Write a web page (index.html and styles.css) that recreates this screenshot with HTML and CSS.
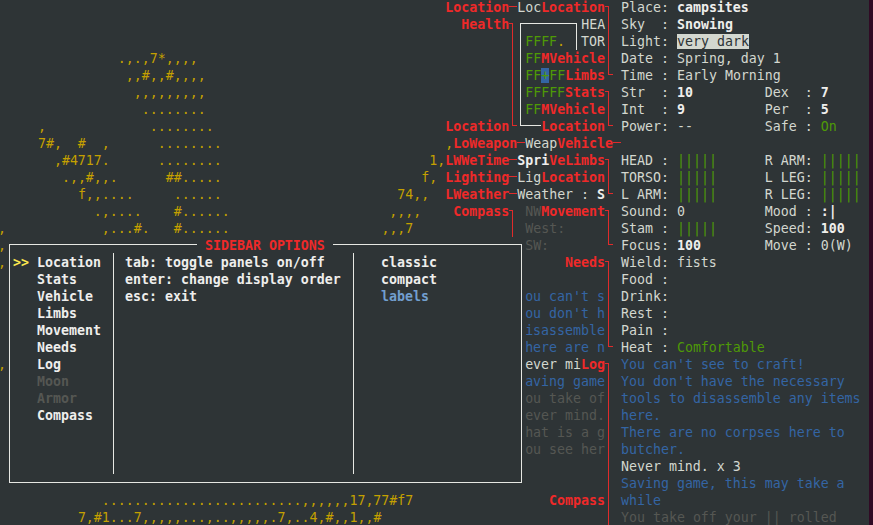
FILE: index.html
```html
<!DOCTYPE html>
<html lang="en">
<head>
<meta charset="utf-8">
<title>Sidebar options</title>
<link rel="stylesheet" href="styles.css">
</head>
<body>
<main class="term">
<div class="row">                                                        <b class="r">Location</b><i class="h r"></i>Loc<b class="r">Location</b><i class="tr r"></i> Place: <b>campsites</b></div>
<div class="row">                                                          <b class="r">Health</b><i class="tr r"></i><i class="tl w"></i><i class="h w"></i><i class="h w"></i><i class="h w"></i><i class="h w"></i><i class="h w"></i><i class="h w"></i><i class="tr w"></i>HEA<i class="v r"></i> Sky  : <b>Snowing</b></div>
<div class="row">                                                                <i class="v r"></i><i class="v w"></i><span class="g">FFFF</span><span class="m">.</span> <i class="v w"></i>TOR<i class="v r"></i> Light: <span class="inv">very dark</span></div>
<div class="row">               <span class="m">.,.,7*,,,,</span>                                       <i class="v r"></i><i class="v w"></i><span class="g">FF</span><b class="r">MVehicle</b><i class="v r"></i> Date : Spring, day 1</div>
<div class="row">                <span class="m">,,#,,#,,,,</span>                                      <i class="v r"></i><i class="v w"></i><span class="g">FF</span><span class="cur">+</span><span class="g">FF</span><b class="r">Limbs</b><i class="bl r"></i> Time : Early Morning</div>
<div class="row">                 <span class="m">,,,,,,,,,</span>                                      <i class="v r"></i><i class="v w"></i><span class="g">FFFFF</span><b class="r">Stats</b><i class="tr r"></i> Str  : <b>10</b>         Dex  : <b>7</b></div>
<div class="row">                  <span class="m">........</span>                                      <i class="v r"></i><i class="v w"></i><span class="g">FF</span><b class="r">MVehicle</b><i class="v r"></i> Int  : <b>9</b>          Per  : <b>5</b></div>
<div class="row">     <span class="m">,</span>             <span class="m">........</span>                             <b class="r">Location</b><i class="bl r"></i><i class="bl w"></i><i class="h w"></i><i class="h w"></i><b class="r">Location</b><i class="bl r"></i> Power: --         Safe : <span class="g">On</span></div>
<div class="row">     <span class="m">7#,  #  ,</span>      <span class="m">........</span>                            <span class="m">,</span><b class="r">LoWeapon</b><i class="h r"></i>Weap<b class="r">Vehicle</b><i class="h r"></i></div>
<div class="row">       <span class="m">,#4717.</span>      <span class="m">........</span>                          <span class="m">1,</span><b class="r">LWWeTime</b><i class="h r"></i><b>Spri</b><b class="r">Ve</b><b class="r">Limbs</b><i class="tr r"></i> HEAD : <span class="g">|||||</span>      R ARM: <span class="g">|||||</span></div>
<div class="row">        <span class="m">.,,#,,.</span>      <span class="m">##.....</span>                         <span class="m">f,</span> <b class="r">Lighting</b><i class="h r"></i>Lig<b class="r">Location</b><i class="v r"></i> TORSO: <span class="g">|||||</span>      L LEG: <span class="g">|||||</span></div>
<div class="row">          <span class="m">f,,....</span>     <span class="m">......</span>                      <span class="m">74,,</span>  <b class="r">LWeather</b><i class="h r"></i>Weather : <b>S</b><i class="bl r"></i> L ARM: <span class="g">|||||</span>      R LEG: <span class="g">|||||</span></div>
<div class="row">            <span class="m">.,....</span>    <span class="m">#......</span>                    <span class="m">,,,,</span>    <b class="r">Compass</b><i class="tr r"></i> <span class="d">NW</span><b class="r">Movement</b><i class="tr r"></i> Sound: 0          Mood : <b>:</b><b>|</b></div>
<div class="row"><span class="m">,</span>            <span class="m">,...#.</span>   <span class="m">#......</span>                   <span class="m">,,,7</span>            <i class="v r"></i> <span class="d">West:</span>     <i class="v r"></i> Stam : <span class="g">|||||</span>      Speed: <b>100</b></div>
<div class="row"><span class="m">,</span>                                                                 <span class="d">SW:</span>       <i class="bl r"></i> Focus: <b>100</b>        Move : 0(W)</div>
<div class="row"><span class="m">,</span>                                                                      <b class="r">Needs</b><i class="tr r"></i> Wield: fists</div>
<div class="row">                                                                            <i class="v r"></i> Food :</div>
<div class="row">                                                                  <span class="u">ou can't s</span><i class="v r"></i> Drink:</div>
<div class="row">                                                                  <span class="u">ou don't h</span><i class="v r"></i> Rest :</div>
<div class="row">                                                                  <span class="u">isassemble</span><i class="v r"></i> Pain :</div>
<div class="row">                                                                  <span class="u">here are n</span><i class="bl r"></i> Heat : <span class="g">Comfortable</span></div>
<div class="row"><span class="m">,</span>                                                                 ever mi<b class="r">Log</b><i class="tr r"></i> <span class="u">You can't see to craft!</span></div>
<div class="row">                                                                  <span class="u">aving game</span><i class="v r"></i> <span class="u">You don't have the necessary</span></div>
<div class="row">                                                                  <span class="d">ou take of</span><i class="v r"></i> <span class="u">tools to disassemble any items</span></div>
<div class="row">                                                                  <span class="d">ever mind.</span><i class="v r"></i> <span class="u">here.</span></div>
<div class="row">                                                                  <span class="d">hat is a g</span><i class="v r"></i> <span class="u">There are no corpses here to</span></div>
<div class="row">                                                                  <span class="d">ou see her</span><i class="v r"></i> <span class="u">butcher.</span></div>
<div class="row">                                                                            <i class="v r"></i> Never mind. x 3</div>
<div class="row">                                                                            <i class="v r"></i> <span class="u">Saving game, this may take a</span></div>
<div class="row">             <span class="m">.........................,,,,,,17,77#f7</span>                 <b class="r">Compass</b><i class="v r"></i> <span class="u">while</span></div>
<div class="row">          <span class="m">7,#1...7,,,,,...,..,,,,,.7,..4,#,,1,,#</span>                            <i class="v r"></i> <span class="d">You take off your || rolled</span></div>
</main>
<section class="dialog">
  <h1 class="dialog-title">SIDEBAR OPTIONS</h1>
  <ul class="panels">
    <li class="panel selected">Location</li>
    <li class="panel">Stats</li>
    <li class="panel">Vehicle</li>
    <li class="panel">Limbs</li>
    <li class="panel">Movement</li>
    <li class="panel">Needs</li>
    <li class="panel">Log</li>
    <li class="panel off">Moon</li>
    <li class="panel off">Armor</li>
    <li class="panel">Compass</li>
  </ul>
  <div class="help">
    <p>tab: toggle panels on/off</p>
    <p>enter: change display order</p>
    <p>esc: exit</p>
  </div>
  <ul class="layouts">
    <li>classic</li>
    <li>compact</li>
    <li class="active">labels</li>
  </ul>
</section>
</body>
</html>
```
FILE: styles.css
```css
html, body {
  margin: 0;
  height: 100%;
  overflow: hidden;
  background: #300a24;
}

body {
  position: relative;
  color: #d3d7cf;
  font-family: "DejaVu Sans Mono", monospace;
  font-size: 13.28px;
  line-height: 17px;
}

.term {
  width: 871px;
  height: 528px;
  margin: -1px 0 0 -2px;
  background: #2e3436;
}

.row {
  height: 17px;
  white-space: pre;
}

b { font-weight: bold; color: #eeeeec; }
b.r { color: #ef2929; }
.m { color: #c4a000; }
.g { color: #4e9a06; }
.u { color: #3465a4; }
.d { color: #555753; }
.inv { background: #d3d7cf; color: #2e3436; }
.cur { background: #3465a4; color: #4e9a06; }

i.r { color: #e02b2b; }
i.w { color: #e6e7e3; }

.h, .v, .tl, .tr, .bl, .br {
  display: inline-block;
  width: 8px;
  height: 17px;
  vertical-align: top;
  background-repeat: no-repeat;
}

.h {
  background-image: linear-gradient(currentColor, currentColor);
  background-size: 8px 1px;
  background-position: 0 7px;
}

.v {
  background-image: linear-gradient(currentColor, currentColor);
  background-size: 1px 17px;
  background-position: 3px 0;
}

.tl, .tr, .bl, .br {
  background-image: linear-gradient(currentColor, currentColor), linear-gradient(currentColor, currentColor);
}

.tl { background-size: 5px 1px, 1px 10px; background-position: 3px 7px, 3px 7px; }
.tr { background-size: 4px 1px, 1px 10px; background-position: 0 7px, 3px 7px; }
.bl { background-size: 5px 1px, 1px 8px; background-position: 3px 7px, 3px 0; }
.br { background-size: 4px 1px, 1px 8px; background-position: 0 7px, 3px 0; }

.dialog {
  position: absolute;
  top: 244px;
  left: 9px;
  box-sizing: border-box;
  width: 513px;
  height: 239px;
  padding: 8px 0;
  display: grid;
  grid-template-columns: 103px 240px 1fr;
  background: #2e3436;
  border: 1px solid #e6e7e3;
  font-weight: bold;
  color: #eeeeec;
}

.dialog-title {
  position: absolute;
  top: -8px;
  left: 187px;
  width: 120px;
  margin: 0;
  padding: 0 8px;
  background: #2e3436;
  color: #ef2929;
  font-size: inherit;
  line-height: inherit;
  white-space: pre;
}

.panels, .layouts {
  margin: 0;
  padding: 1px 0 0;
  list-style: none;
}

.panels { padding-left: 27px; }

.selected::before {
  content: ">>";
  display: inline-block;
  width: 24px;
  margin-left: -24px;
  color: #fce94f;
}

.off { color: #555753; }

.help {
  padding: 1px 0 0 11px;
  border-left: 1px solid #e6e7e3;
}

.help p { margin: 0; }

.layouts {
  padding-left: 27px;
  border-left: 1px solid #e6e7e3;
}

.active { color: #729fcf; }
```
